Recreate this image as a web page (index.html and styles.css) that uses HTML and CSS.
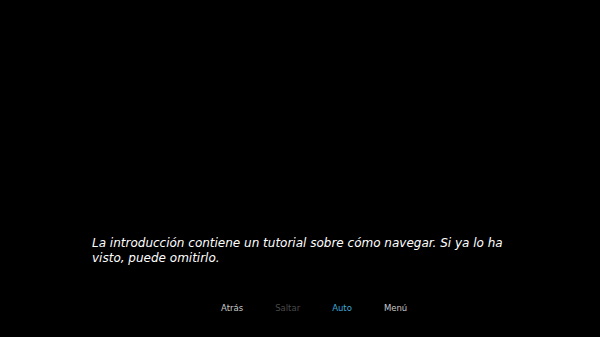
FILE: index.html
```html
<!DOCTYPE html>
<html lang="es">
<head>
<meta charset="utf-8">
<title>Intro</title>
<link rel="stylesheet" href="styles.css">
</head>
<body>
<main class="screen">
  <div class="say">
    <p class="what">La introducción contiene un tutorial sobre cómo navegar. Si ya lo ha visto, puede omitirlo.</p>
  </div>
  <nav class="quick">
    <span class="btn">Atrás</span>
    <span class="btn off">Saltar</span>
    <span class="btn on">Auto</span>
    <span class="btn">Menú</span>
  </nav>
</main>
</body>
</html>
```
FILE: styles.css
```css
html, body {
  margin: 0;
  padding: 0;
  background: #000;
}
.screen {
  width: 600px;
  height: 337px;
  display: flex;
  flex-direction: column;
  background: #000;
  font-family: "DejaVu Sans", sans-serif;
}
.say {
  padding: 236px 0 0 92px;
  height: 66px;
}
.what {
  margin: 0;
  width: 430px;
  color: #fff;
  font-size: 12px;
  line-height: 15px;
  font-style: italic;
}
.quick {
  display: flex;
  gap: 32px;
  padding-left: 221px;
}
.btn {
  font-size: 8.5px;
  line-height: 12px;
  color: #c8c8c8;
}
.btn.off {
  color: #4a4a4a;
}
.btn.on {
  color: #3fa6d6;
}
```
